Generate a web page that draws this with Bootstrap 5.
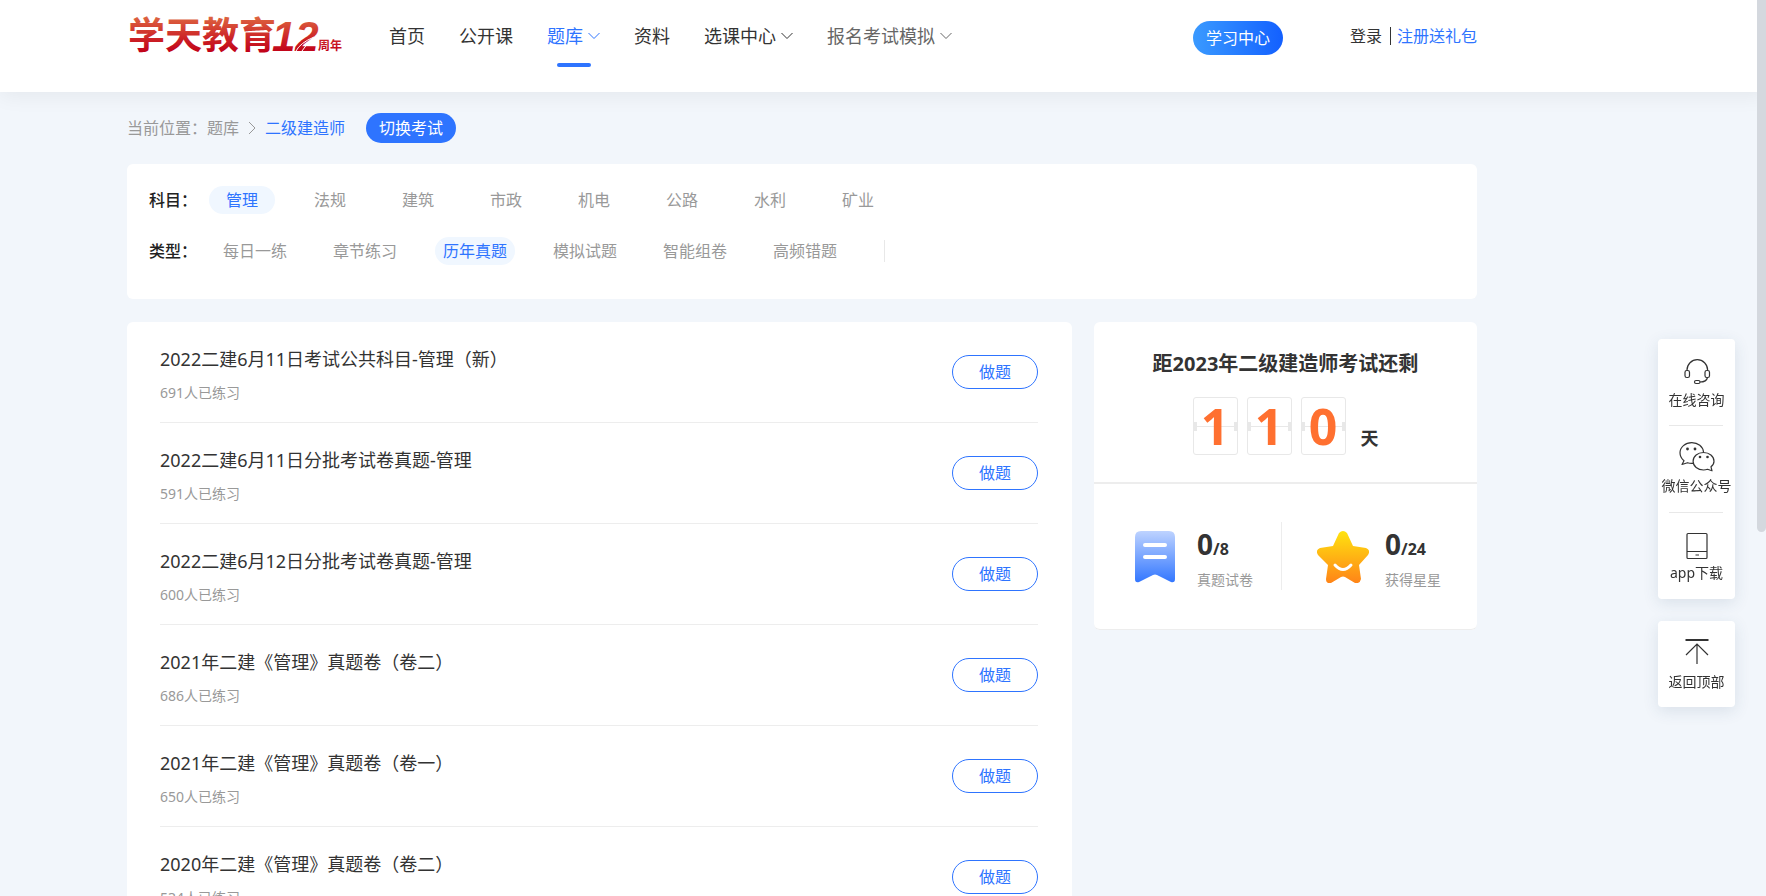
<!DOCTYPE html>
<html lang="zh-CN">
<head>
<meta charset="utf-8">
<meta name="viewport" content="width=device-width, initial-scale=1">
<title>二级建造师题库 - 学天教育</title>
<link href="https://cdn.jsdelivr.net/npm/bootstrap@5.3.0/dist/css/bootstrap.min.css" rel="stylesheet">
<style>
:root { --brand: #2e74ff; --ink: #333; --soft: #999; --line: #ededed; }
html { scrollbar-width: none; }
body { background: #f2f6fb; color: var(--ink); font-family: "Noto Sans", "Noto Sans CJK SC", sans-serif; font-size: 16px; line-height: 24px; font-weight: 400; }
a { text-decoration: none; color: inherit; }
.page { max-width: 1350px; margin-left: max(16px, calc(50vw - 756px)); margin-right: auto; }
.site-head { background: #fff; height: 92px; box-shadow: 0 4px 20px rgba(0,0,0,.06); position: relative; }
.brand { width: 216px; height: 44px; margin: 12px 46px 0 0; }
.brand svg { display: block; overflow: visible; }
.main-nav { gap: 34px; padding-top: 22px; font-size: 18px; line-height: 28px; }
.main-nav a { white-space: nowrap; position: relative; display: flex; align-items: center; gap: 5px; }
.main-nav .on { color: var(--brand); }
.main-nav .on::after { content: ""; position: absolute; left: 10px; bottom: -17px; width: 34px; height: 4px; border-radius: 2px; background: var(--brand); }
.main-nav .dim { color: #666; }
.study { width: 90px; height: 34px; padding: 0; border: 0; border-radius: 17px; color: #fff; font-size: 16px; background: linear-gradient(90deg, #3a9aff, #1360ff); margin: 21px 67px 0 0; }
.account { padding-top: 24px; }
.account .reg { border-left: 1px solid #333; padding-left: 6px; margin-left: 8px; line-height: 18px; color: var(--brand); }
.crumb-row { padding-top: 21px; height: 72px; color: var(--soft); line-height: 30px; }
.crumb-row svg { margin: 8px 7px 0; }
.crumb-row .here { color: var(--brand); }
.switch { height: 30px; width: 90px; padding: 0; border: 0; border-radius: 15px; background: var(--brand); color: #fff; margin-left: 21px; line-height: 30px; }
.panel { background: #fff; border-radius: 6px; }
.filters { padding: 22px 22px 34px; margin-bottom: 23px; }
.filter-row { margin-bottom: 23px; }
.filters .tag { color: var(--soft); border-radius: 14px; line-height: 28px; text-align: center; background: none; border: 0; padding: 0; }
.filters .on { background: #f0f7ff; color: var(--brand); }
.filter-name { font-weight: 500; color: #222; width: 40px; white-space: nowrap; line-height: 28px; }
.subjects .tag { width: 66px; }
.subjects { gap: 22px; margin-left: 20px; }
.kinds .tag { width: 80px; }
.kinds { gap: 30px; margin-left: 26px; }
.filter-end { width: 1px; height: 22px; background: #e8e8e8; margin-left: 9px; }
.columns { display: grid; grid-template-columns: 945fr 383fr; gap: 22px; align-items: start; }
.papers { padding: 0 34px 0 33px; }
.paper { height: 101px; border-bottom: 1px solid var(--line); }
.paper-text { padding-top: 6px; }
.paper h2 { font-size: 18px; line-height: 26px; font-weight: 400; margin: 0 0 10px; }
.paper p { font-size: 14px; line-height: 22px; color: var(--soft); margin: 0; }
.do { width: 86px; height: 34px; border: 1px solid var(--brand); border-radius: 17px; background: #fff; color: var(--brand); font-size: 16px; padding: 0; }
.countdown { height: 162px; border-bottom: 2px solid var(--line); padding-top: 28px; }
.countdown h3 { font-size: 20px; line-height: 28px; font-weight: 700; margin: 0 0 19px; }
.digits { gap: 9px; }
.digit { width: 45px; height: 58px; border: 1px solid #e8e8e8; border-radius: 3px; color: #ff7030; font-size: 50px; line-height: 57px; font-weight: 700; text-align: center; background: linear-gradient(#e8e8e8, #e8e8e8) 0 24px / 3px 9px no-repeat, linear-gradient(#e8e8e8, #e8e8e8) 100% 24px / 3px 9px no-repeat, linear-gradient(#e8e8e8, #e8e8e8) 0 28px / 100% 1px no-repeat; }
.unit-day { font-size: 18px; line-height: 26px; font-weight: 700; margin: 0 0 4px 6px; }
.stats { display: grid; grid-template-columns: 187fr 196fr; padding: 38px 0 39px; border-bottom: 1px solid var(--line); border-radius: 6px; }
.stat { height: 68px; padding-left: 41px; gap: 22px; }
.stat + .stat { border-left: 1px solid var(--line); padding-left: 35px; gap: 16px; }
.stat-pic { margin-top: 9px; flex: none; }
.stat-text { padding-top: 5px; }
.stat strong { font-size: 28px; line-height: 34px; font-weight: 700; display: block; }
.stat strong span { font-size: 16px; }
.stat small { font-size: 14px; line-height: 22px; color: var(--soft); display: block; margin-top: 3px; }
.dock { position: fixed; right: 31px; top: 339px; width: 77px; font-size: 14px; line-height: 20px; }
.dock .box { background: #fff; border-radius: 4px; box-shadow: 0 4px 16px rgba(40,70,110,.12); margin-bottom: 22px; }
.dock a { display: flex; flex-direction: column; align-items: center; gap: 1px; height: 86px; padding-top: 16px; white-space: nowrap; position: relative; }
.dock a + a { height: 87px; }
.dock a + a::before { content: ""; position: absolute; top: 0; left: 11px; right: 12px; height: 1px; background: #e8e8e8; }
.dock svg { height: 34px; width: 36px; flex: none; }
.scroll-thumb { position: fixed; right: 0; top: 0; width: 9px; height: 532px; background: #d4d8de; border-radius: 0 0 5px 5px; }
</style>
<script src="https://cdn.jsdelivr.net/npm/bootstrap@5.3.0/dist/js/bootstrap.bundle.min.js"></script>
</head>
<body>
<header class="site-head">
  <div class="page d-flex align-items-start">
    <a href="#" class="brand" aria-label="学天教育12周年">
      <svg width="216" height="44" viewBox="0 0 216 44">
        <defs><linearGradient id="red" x1="0" y1="5" x2="0" y2="41" gradientUnits="userSpaceOnUse"><stop offset="0" stop-color="#dd6440"/><stop offset=".6" stop-color="#cc2226"/><stop offset="1" stop-color="#c00018"/></linearGradient></defs>
        <g fill="url(#red)" font-family="'Noto Sans CJK SC', sans-serif" font-weight="700">
          <text x="1" y="37" font-size="37">学天教育</text>
          <text x="145" y="39" font-size="42" font-style="italic" font-family="'Liberation Sans', sans-serif">12</text>
          <text x="191" y="38" font-size="12">周年</text>
        </g>
        <path d="M169 39q4-8 18-14M175 39q3-6 11-11" fill="none" stroke="#fff"/>
      </svg>
    </a>
    <nav class="main-nav d-flex">
      <a href="#">首页</a>
      <a href="#">公开课</a>
      <a href="#" class="on">题库<svg width="12" height="8" viewBox="0 0 12 8" fill="none" stroke="currentColor"><path d="M.5 1 6 6.500 11.500 1"/></svg></a>
      <a href="#">资料</a>
      <a href="#">选课中心<svg width="12" height="8" viewBox="0 0 12 8" fill="none" stroke="currentColor"><path d="M.5 1 6 6.500 11.500 1"/></svg></a>
      <a href="#" class="dim">报名考试模拟<svg width="12" height="8" viewBox="0 0 12 8" fill="none" stroke="currentColor"><path d="M.5 1 6 6.500 11.500 1"/></svg></a>
    </nav>
    <button type="button" class="study ms-auto">学习中心</button>
    <div class="account d-flex align-items-center">
      <a href="#">登录</a><a href="#" class="reg">注册送礼包</a>
    </div>
  </div>
</header>
<main class="page">
  <div class="crumb-row d-flex align-items-start">
    <span>当前位置：</span><a href="#">题库</a>
    <svg width="12" height="14" viewBox="0 0 12 14" fill="none" stroke="#999"><path d="m3 1 6 6-6 6"/></svg>
    <a href="#" class="here">二级建造师</a>
    <button type="button" class="switch">切换考试</button>
  </div>
  <section class="panel filters">
    <div class="filter-row d-flex">
      <span class="filter-name">科目：</span>
      <div class="subjects d-flex">
        <button type="button" class="tag on">管理</button><button type="button" class="tag">法规</button><button type="button" class="tag">建筑</button><button type="button" class="tag">市政</button><button type="button" class="tag">机电</button><button type="button" class="tag">公路</button><button type="button" class="tag">水利</button><button type="button" class="tag">矿业</button>
      </div>
    </div>
    <div class="d-flex">
      <span class="filter-name">类型：</span>
      <div class="kinds d-flex align-items-center">
        <button type="button" class="tag">每日一练</button><button type="button" class="tag">章节练习</button><button type="button" class="tag on">历年真题</button><button type="button" class="tag">模拟试题</button><button type="button" class="tag">智能组卷</button><button type="button" class="tag">高频错题</button><span class="filter-end"></span>
      </div>
    </div>
  </section>
  <div class="columns">
    <section class="panel papers">
      <article class="paper d-flex align-items-center justify-content-between"><div class="paper-text"><h2>2022二建6月11日考试公共科目-管理（新）</h2><p>691人已练习</p></div><button type="button" class="do">做题</button></article>
      <article class="paper d-flex align-items-center justify-content-between"><div class="paper-text"><h2>2022二建6月11日分批考试卷真题-管理</h2><p>591人已练习</p></div><button type="button" class="do">做题</button></article>
      <article class="paper d-flex align-items-center justify-content-between"><div class="paper-text"><h2>2022二建6月12日分批考试卷真题-管理</h2><p>600人已练习</p></div><button type="button" class="do">做题</button></article>
      <article class="paper d-flex align-items-center justify-content-between"><div class="paper-text"><h2>2021年二建《管理》真题卷（卷二）</h2><p>686人已练习</p></div><button type="button" class="do">做题</button></article>
      <article class="paper d-flex align-items-center justify-content-between"><div class="paper-text"><h2>2021年二建《管理》真题卷（卷一）</h2><p>650人已练习</p></div><button type="button" class="do">做题</button></article>
      <article class="paper d-flex align-items-center justify-content-between"><div class="paper-text"><h2>2020年二建《管理》真题卷（卷二）</h2><p>534人已练习</p></div><button type="button" class="do">做题</button></article>
    </section>
    <aside class="panel">
      <div class="countdown text-center">
        <h3>距2023年二级建造师考试还剩</h3>
        <div class="digits d-flex justify-content-center align-items-end">
          <span class="digit">1</span><span class="digit">1</span><span class="digit">0</span><span class="unit-day">天</span>
        </div>
      </div>
      <div class="stats">
        <div class="stat d-flex align-items-start">
          <svg class="stat-pic" width="40" height="52" viewBox="0 0 40 52"><defs><linearGradient id="bm" x1="0" y1="0" x2="0" y2="1"><stop stop-color="#bed3ff"/><stop offset="1" stop-color="#3377ff"/></linearGradient></defs><path fill="url(#bm)" d="M6 0h28q6 0 6 6v42q0 4-4 3L22 44q-2-1-4 0L4 51q-4 1-4-3V6q0-6 6-6z"/><path d="M10 14h20M10 26h20" stroke="#fff" stroke-width="4" stroke-linecap="round"/></svg>
          <div class="stat-text"><strong>0<span>/8</span></strong><small>真题试卷</small></div>
        </div>
        <div class="stat d-flex align-items-start">
          <svg class="stat-pic" width="52" height="52" viewBox="0 0 52 52"><defs><linearGradient id="st" x1="0" y1="0" x2="0" y2="1"><stop stop-color="#ffe30f"/><stop offset="1" stop-color="#ff8418"/></linearGradient></defs><path fill="url(#st)" d="M22 2q4-4 8 0l6 13 13 2q5 2 2 7l-9 10 2 14q-1 5-6 4l-10-6q-2-1-4 0l-10 6q-5 1-5-4l2-14L1 24q-3-5 2-7l13-2z"/><path d="M18 34q8 9 16 0" stroke="#fff" stroke-width="3" stroke-linecap="round" fill="none"/></svg>
          <div class="stat-text"><strong>0<span>/24</span></strong><small>获得星星</small></div>
        </div>
      </div>
    </aside>
  </div>
</main>
<aside class="dock">
  <div class="box">
    <a href="#"><svg viewBox="0 0 36 34" fill="none" stroke="#333" stroke-width="1.200"><path d="M8 15.500V15a10.300 10.300 0 0 1 20.600 0v.5M28.500 22.500q-1 4.500-7.500 4.500"/><rect x="6" y="15.500" width="4.500" height="7" rx="1.800"/><rect x="26" y="15.500" width="4.500" height="7" rx="1.800"/><rect x="15.500" y="25.500" width="5.500" height="3" rx="1.500"/></svg>在线咨询</a>
    <a href="#"><svg viewBox="0 0 36 34" fill="none" stroke="#333" stroke-width="1.200" stroke-linejoin="round"><path d="M24.500 11C24 5.500 19 1.600 12.800 1.600 6.200 1.600 1 6.200 1 11.800c0 3.600 1.600 6 4 8L3 23.500l5.500-1.800q3 1 6 .6"/><path d="M24.500 11.500c-5.800 0-10.400 3.800-10.400 8.800S18.700 29 24.500 29q2.200 0 4-.7l4.500 1.500-1-4c2-1.500 3-3.300 3-5.500 0-5-4.700-8.800-10.500-8.800z"/><g fill="#333" stroke="none"><circle cx="8.500" cy="8" r="1.400"/><circle cx="16" cy="8" r="1.400"/><circle cx="21" cy="16" r="1.300"/><circle cx="28.500" cy="16" r="1.300"/></g></svg>微信公众号</a>
    <a href="#"><svg viewBox="0 0 36 34" fill="none" stroke="#333" stroke-width="1.200"><rect x="8" y="5.500" width="20" height="25" rx="1"/><path d="M8 23.500h20M16.500 27h3.500"/></svg>app下载</a>
  </div>
  <div class="box"><a href="#"><svg viewBox="0 0 36 34" fill="none" stroke="#333" stroke-width="1.200"><path d="M6.500 3h23" stroke-width="2"/><path d="M18 27V7M7 18 18 7l11 11"/></svg>返回顶部</a></div>
</aside>
<div class="scroll-thumb"></div>
</body>
</html>
